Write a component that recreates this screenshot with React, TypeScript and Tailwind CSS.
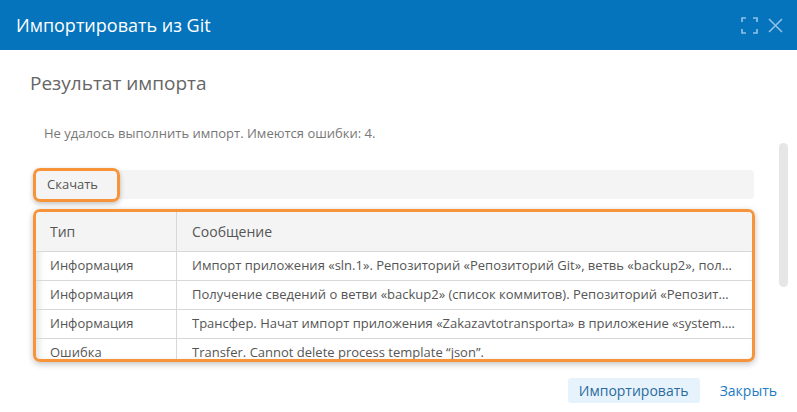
const rows = [
  {
    type: "Информация",
    message:
      "Импорт приложения «sln.1». Репозиторий «Репозиторий Git», ветвь «backup2», полный импорт",
  },
  {
    type: "Информация",
    message:
      "Получение сведений о ветви «backup2» (список коммитов). Репозиторий «Репозиторий Git»",
  },
  {
    type: "Информация",
    message:
      "Трансфер. Начат импорт приложения «Zakazavtotransporta» в приложение «system.zakazavtotransporta»",
  },
  {
    type: "Ошибка",
    message: "Transfer. Cannot delete process template “json”.",
  },
];

const FullscreenIcon = () => (
  <svg width="17" height="17" viewBox="0 0 17 17" fill="none" stroke="currentColor" strokeWidth="1.7">
    <path d="M1 5V1h4M12 1h4v4M16 12v4h-4M5 16H1v-4" />
  </svg>
);

const CloseIcon = () => (
  <svg width="15" height="15" viewBox="0 0 15 15" fill="none" stroke="currentColor" strokeWidth="1.6">
    <path d="M1 1l13 13M14 1L1 14" />
  </svg>
);

const App = () => {
  return (
    <div
      className="relative w-[797px] h-[412px] overflow-hidden bg-white"
      style={{ fontFamily: '"Open Sans", "Noto Sans", sans-serif' }}
    >
      <div className="flex h-[50px] items-center justify-between bg-[#0674bc] pl-4 pr-[14px]">
        <span className="text-[18px] text-white">Импортировать из Git</span>
        <div className="flex items-center gap-[10px] text-[#8fc0e6]">
          <FullscreenIcon />
          <CloseIcon />
        </div>
      </div>

      <div className="pl-[30px] pt-[20px]">
        <h2 className="text-[19px] leading-[26px] text-[#666]">Результат импорта</h2>
        <p className="mt-[28px] pl-[14px] text-[13px] leading-[18px] text-[#777]">
          Не удалось выполнить импорт. Имеются ошибки: 4.
        </p>
      </div>

      <div className="ml-[35px] w-[719px]">
        <div className="relative mt-[28px] h-[29px] rounded bg-[#f4f4f4]">
          <div className="absolute -left-[2px] -top-[2px] flex h-[34px] w-[87px] items-center rounded-[7px] border-[3px] border-[#f7943a] pl-[11px] text-[13px] text-[#555] shadow-[0_2px_5px_rgba(0,0,0,0.25)]">
            Скачать
          </div>
        </div>

        <div className="-ml-[2px] mt-[10px] h-[153px] w-[722px] overflow-hidden rounded-[7px] border-[3px] border-[#f7943a] shadow-[0_2px_6px_rgba(0,0,0,0.25)]">
          <div className="h-full shadow-[inset_3px_2px_6px_rgba(0,0,0,0.12)]">
            <div className="flex h-[40px] border-b border-[#d8d8d8] bg-[#f4f4f4] text-[14px] text-[#555]">
              <div className="flex w-[141px] items-center border-r border-[#d8d8d8] pl-[14px]">Тип</div>
              <div className="flex flex-1 items-center pl-[15px]">Сообщение</div>
            </div>
            {rows.map((row, i) => (
              <div key={i} className="flex h-[29px] shrink-0 border-b border-[#d8d8d8] text-[13px] text-[#555]">
                <div className="flex w-[141px] items-center border-r border-[#d8d8d8] pl-[14px]">{row.type}</div>
                <div className="flex min-w-0 flex-1 items-center pl-[15px] pr-[16px]">
                  <span className="truncate">{row.message}</span>
                </div>
              </div>
            ))}
          </div>
        </div>
      </div>

      <div className="mt-[16px] flex items-center justify-end gap-[20px] pr-[20px]">
        <button className="h-[25px] w-[132px] rounded-[3px] bg-[#e6f3fc] text-[14px] text-[#2c6a9d]">
          Импортировать
        </button>
        <button className="text-[14px] text-[#1e7cc3]">Закрыть</button>
      </div>

      <div className="absolute left-[779px] top-[143px] h-[144px] w-[9px] rounded-full bg-[#e6e6e6]" />
    </div>
  );
};

export default App;
